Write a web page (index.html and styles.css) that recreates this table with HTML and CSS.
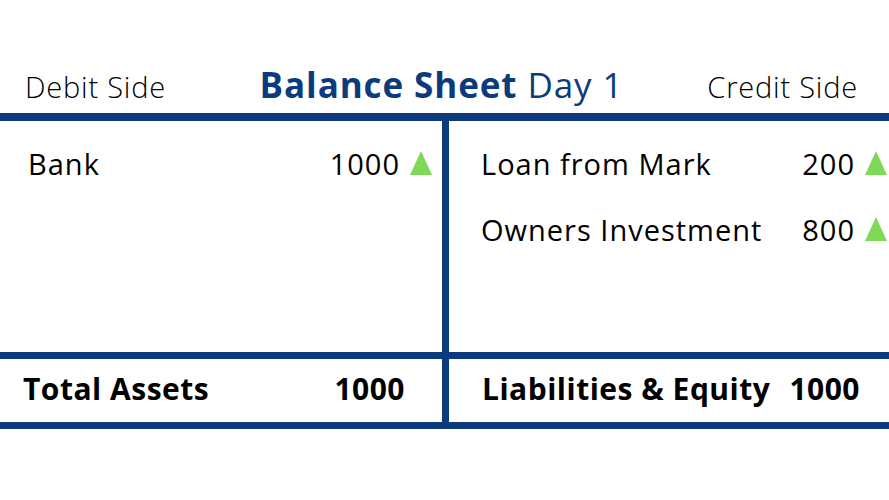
FILE: index.html
```html
<!DOCTYPE html>
<html>
<head>
<meta charset="utf-8">
<link rel="stylesheet" href="styles.css">
</head>
<body>
<div class="page">
  <div class="header">
    <span class="side debit">Debit Side</span>
    <span class="title"><b>Balance Sheet</b> Day 1</span>
    <span class="side credit">Credit Side</span>
  </div>
  <div class="table">
    <div class="col left">
      <div class="body">
        <div class="row"><span>Bank</span><span class="amt">1000 <svg class="up" viewBox="0 0 22 24"><polygon points="11,0 22,24 0,24"/></svg></span></div>
      </div>
      <div class="total"><span>Total Assets</span><span>1000</span></div>
    </div>
    <div class="divider"></div>
    <div class="col right">
      <div class="body">
        <div class="row"><span>Loan from Mark</span><span class="amt">200 <svg class="up" viewBox="0 0 22 24"><polygon points="11,0 22,24 0,24"/></svg></span></div>
        <div class="row"><span>Owners Investment</span><span class="amt">800 <svg class="up" viewBox="0 0 22 24"><polygon points="11,0 22,24 0,24"/></svg></span></div>
      </div>
      <div class="total"><span>Liabilities &amp; Equity</span><span>1000</span></div>
    </div>
  </div>
</div>
</body>
</html>
```
FILE: styles.css
```css
html, body { margin: 0; padding: 0; background: #fff; }
body { font-family: "Open Sans", sans-serif; color: #000; width: 889px; height: 500px; overflow: hidden; }
.page { padding-top: 61px; }
.header { display: grid; grid-template-columns: 1fr auto 1fr; align-items: baseline; padding: 0 31px 0 25px; height: 52px; }
.side { font-weight: 300; font-size: 29px; letter-spacing: 0.8px; }
.credit { justify-self: end; }
.title { color: #0c3b7d; font-size: 35px; letter-spacing: 0.9px; }
.title b { font-weight: 700; }
.table { display: flex; border-top: 8px solid #0c3b7d; border-bottom: 7px solid #0c3b7d; }
.col { display: flex; flex-direction: column; }
.left { width: 442px; }
.right { flex: 1; }
.divider { width: 7px; background: #0c3b7d; }
.body { height: 231px; box-sizing: border-box; padding-top: 24px; display: flex; flex-direction: column; gap: 30px; }
.row { display: flex; justify-content: space-between; align-items: center; font-size: 29px; letter-spacing: 1px; height: 36px; }
.left .row { padding: 0 10px 0 28px; }
.right .row { padding: 0 2px 0 32px; }
.amt { display: flex; align-items: center; gap: 10px; }
.up { width: 22px; height: 24px; fill: #7ed957; }
.total { border-top: 7px solid #0c3b7d; height: 70px; box-sizing: border-box; padding-bottom: 5px; display: flex; justify-content: space-between; align-items: center; font-weight: 700; font-size: 30px; letter-spacing: 0.5px; }
.left .total { padding-left: 23px; padding-right: 37px; }
.right .total { padding-left: 33px; padding-right: 29px; }
```
